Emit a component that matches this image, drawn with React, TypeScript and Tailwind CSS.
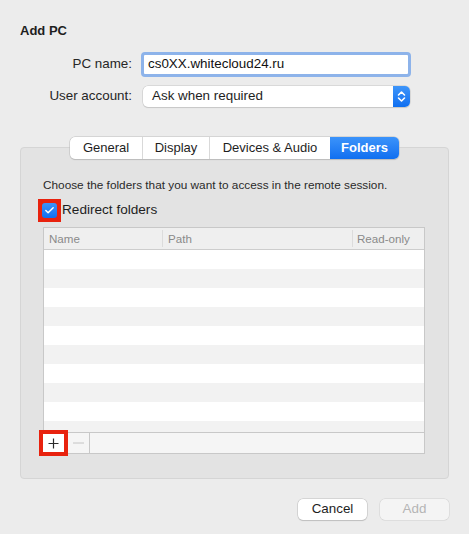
import { Check } from 'lucide-react'

const tabs = [
  { label: 'General', w: 'w-[72px]' },
  { label: 'Display', w: 'w-[67px]' },
  { label: 'Devices & Audio', w: 'w-[121px]' },
  { label: 'Folders', w: 'w-[69px]' },
]

const rows = Array.from({ length: 10 }, (_, i) => i)

function Chevrons() {
  return (
    <svg width="9" height="13" viewBox="0 0 9 13" fill="none" stroke="white" strokeWidth="1.6" strokeLinecap="round" strokeLinejoin="round">
      <path d="M1.5 5 L4.5 2 L7.5 5" />
      <path d="M1.5 8 L4.5 11 L7.5 8" />
    </svg>
  )
}

export default function App() {
  return (
    <div
      className="flex h-[534px] w-[469px] flex-col bg-[#ececec] text-[#222]"
      style={{ fontFamily: '"Liberation Sans", Arial, sans-serif' }}
    >
      <h1 className="pl-[20px] pt-[23px] text-[13px] font-bold leading-4 text-[#1e1e1e]">Add PC</h1>

      <div className="mt-[13px] grid grid-cols-[133px_1fr] items-center gap-y-[9px] pr-[58px]">
        <label className="pr-[1px] text-right text-[13.4px] text-[#262626]">PC name:</label>
        <div className="ml-[8px] flex h-[25px] items-center rounded-[4px] border-[3px] border-[#8db3ea] bg-white pl-[4px] text-[13.4px] text-[#111]">
          cs0XX.whitecloud24.ru
        </div>
        <label className="pr-[1px] text-right text-[13.4px] text-[#262626]">User account:</label>
        <div className="ml-[10px] mr-[1px] flex h-[21px] items-center justify-between rounded-[5px] bg-white pl-[9px] text-[13.4px] text-[#1e1e1e] shadow-[0_0_0_0.5px_#c6c6c6,0_1px_1px_rgba(0,0,0,0.15)]">
          <span>Ask when required</span>
          <span className="flex h-[21px] w-[17px] items-center justify-center rounded-r-[5px] bg-gradient-to-b from-[#3d95fa] to-[#0e6ff0]">
            <Chevrons />
          </span>
        </div>
      </div>

      <div className="mx-[20px] mt-[40px] flex h-[332px] flex-col rounded-[4px] border border-[#d5d5d5] bg-[#e3e3e3]">
        <div className="-mt-[11px] flex justify-center">
          <div className="flex h-[22px] overflow-hidden rounded-[5px] bg-white text-[13px] shadow-[0_0_0_0.5px_#bdbdbd,0_1px_1px_rgba(0,0,0,0.18)]">
            {tabs.map((t, i) => (
              <div
                key={t.label}
                className={`${t.w} flex items-center justify-center ${
                  t.label === 'Folders'
                    ? 'bg-gradient-to-b from-[#3b93fa] to-[#0f6ff0] font-bold text-white'
                    : 'text-[#1e1e1e]'
                } ${i > 0 && t.label !== 'Folders' ? 'border-l border-[#d9d9d9]' : ''}`}
              >
                {t.label}
              </div>
            ))}
          </div>
        </div>

        <p className="mt-[19px] pl-[22px] text-[11.8px] leading-[14px] text-[#2a2a2a]">
          Choose the folders that you want to access in the remote session.
        </p>

        <div className="mt-[7px] flex items-center pl-[17px]">
          <div className="flex h-[23px] w-[23px] items-center justify-center bg-[#e8220e]">
            <div className="flex h-[15px] w-[15px] items-center justify-center rounded-[3px] bg-gradient-to-b from-[#3b93fa] to-[#0f6ff0]">
              <Check size={11} strokeWidth={3.2} color="white" />
            </div>
          </div>
          <span className="ml-[1px] text-[13.6px] text-[#1e1e1e]">Redirect folders</span>
        </div>

        <div className="ml-[22px] mr-[23px] mt-[5px] flex h-[227px] flex-col border border-[#c8c8c8] bg-white">
          <div className="flex h-[22px] shrink-0 items-center border-b border-[#cdcdcd] bg-[#efefef] text-[11.6px] text-[#8a8a8a]">
            <div className="w-[119px] border-r border-[#dcdcdc] pl-[5px]">Name</div>
            <div className="w-[190px] border-r border-[#dcdcdc] pl-[5px]">Path</div>
            <div className="flex-1 pl-[4px]">Read-only</div>
          </div>
          <div className="flex-1 overflow-hidden">
            {rows.map((r) => (
              <div key={r} className={`h-[19px] ${r % 2 === 0 ? 'bg-white' : 'bg-[#f2f2f2]'}`} />
            ))}
          </div>
          <div className="flex h-[21px] shrink-0 items-stretch border-t border-[#c8c8c8] bg-[#f5f5f5]">
            <div className="-my-[3px] -ml-[5px] flex w-[29px] items-center justify-center border-[4px] border-[#e8220e] bg-white text-[#222]">
              <svg width="11" height="11" viewBox="0 0 11 11" stroke="#2a2a2a" strokeWidth="1.2">
                <path d="M5.5 0.5 V10.5 M0.5 5.5 H10.5" />
              </svg>
            </div>
            <div className="flex w-[22px] items-center justify-center border-r border-[#c8c8c8]">
              <svg width="11" height="2" viewBox="0 0 11 2" stroke="#c4c4c4" strokeWidth="1">
                <path d="M0 1 H11" />
              </svg>
            </div>
            <div className="flex-1" />
          </div>
        </div>
      </div>

      <div className="mr-[20px] mt-[20px] flex justify-end gap-[13px] text-[13.4px]">
        <button className="h-[21px] w-[69px] rounded-[5px] bg-white text-[#1e1e1e] shadow-[0_0_0_0.5px_#bdbdbd,0_1px_1px_rgba(0,0,0,0.18)]">
          Cancel
        </button>
        <button className="h-[21px] w-[69px] rounded-[5px] bg-[#f4f4f4] text-[#b5b5b5] shadow-[0_0_0_0.5px_#d0d0d0]">
          Add
        </button>
      </div>
    </div>
  )
}
